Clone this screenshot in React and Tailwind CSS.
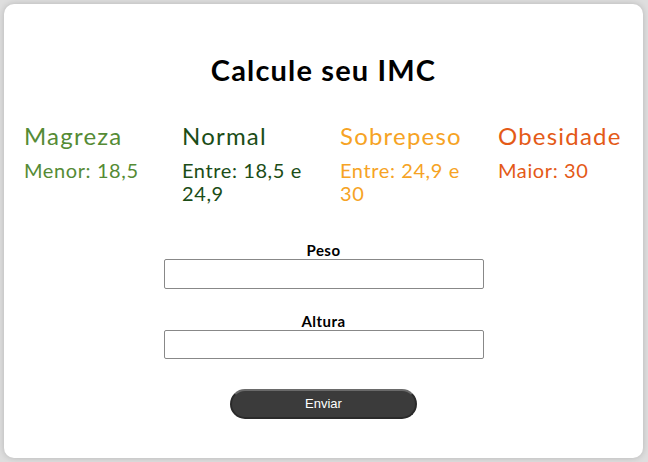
import React from "react";

const categorias = [
  { nome: "Magreza", faixa: "Menor: 18,5", cor: "text-[#558b35]" },
  { nome: "Normal", faixa: "Entre: 18,5 e 24,9", cor: "text-[#1b4d17]" },
  { nome: "Sobrepeso", faixa: "Entre: 24,9 e 30", cor: "text-[#f6a324]" },
  { nome: "Obesidade", faixa: "Maior: 30", cor: "text-[#e45a17]" },
];

const App = () => {
  return (
    <div className="w-[648px] h-[462px] bg-[#dedede] p-1 font-['Lato',sans-serif]">
      <div className="h-[454px] w-[639px] bg-white rounded-[10px] shadow-[0_0_6px_rgba(0,0,0,0.18)] flex flex-col items-center">
        <h1 className="mt-[49px] text-[29px] leading-[34px] font-bold text-black tracking-[0.04em]">
          Calcule seu IMC
        </h1>
        <div className="mt-[34px] w-full px-5 grid grid-cols-4 gap-[33px]">
          {categorias.map((c) => (
            <div key={c.nome} className={c.cor}>
              <h2 className="text-[24px] leading-[30px] whitespace-nowrap tracking-[0.05em]">
                {c.nome}
              </h2>
              <p className="mt-[8px] text-[20px] leading-[23px] tracking-[0.03em]">{c.faixa}</p>
            </div>
          ))}
        </div>
        <form className="mt-[37px] flex flex-col items-center">
          <label className="text-[15px] leading-[17px] font-bold text-black tracking-[0.03em]">
            Peso
          </label>
          <input
            type="text"
            className="w-[320px] h-[30px] border border-[#888] rounded-[2px]"
          />
          <label className="mt-[24px] text-[15px] leading-[17px] font-bold text-black tracking-[0.03em]">
            Altura
          </label>
          <input
            type="text"
            className="w-[320px] h-[29px] border border-[#888] rounded-[2px]"
          />
          <button
            type="button"
            className="mt-[30px] w-[187px] h-[30px] rounded-full bg-[#3b3b3b] border-2 border-[#2a2a2a] border-t-[#6a6a6a] text-white text-[13px] font-['Liberation_Sans',sans-serif]"
          >
            Enviar
          </button>
        </form>
      </div>
    </div>
  );
};

export default App;
